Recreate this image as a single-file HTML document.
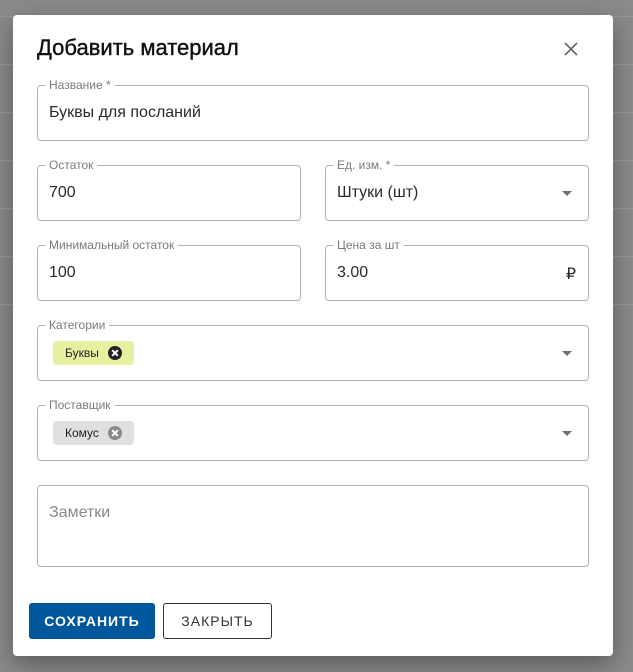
<!DOCTYPE html>
<html><head><meta charset="utf-8"><style>
*{box-sizing:border-box;margin:0;padding:0}
body{width:633px;height:672px;background:#8a8a8a;position:relative;overflow:hidden;font-family:"Liberation Sans","DejaVu Sans",sans-serif}
.ln{position:absolute;left:0;width:633px;height:1px;background:#9a9a9a}
.dlg{position:absolute;left:13px;top:15px;width:600px;height:641px;background:#fff;border-radius:4px;box-shadow:0 8px 24px rgba(0,0,0,.35)}
h1{position:absolute;left:37px;top:35px;font-size:22px;font-weight:normal;color:#111;-webkit-text-stroke:0.4px #111}
.f{position:absolute;border:1px solid #b0b0b0;border-radius:4px}
.lb{position:absolute;top:-8px;left:7px;padding:0 4px;background:#fff;font-size:12px;color:#7a7a7a;line-height:14px}
.v{position:absolute;left:11px;top:18px;font-size:16px;color:#2a2a2a}
.arr{position:absolute;right:16px;top:25px;width:0;height:0;border-left:5px solid transparent;border-right:5px solid transparent;border-top:5px solid #707070}
.chip{position:absolute;left:15px;top:15px;height:24px;border-radius:4px;font-size:12px;color:#222;padding:0 0 0 12px;line-height:24px}
.x{display:inline-block;width:14px;height:14px;border-radius:50%;vertical-align:-3px;margin:0 12px 0 9px;position:relative}
.x:before,.x:after{content:"";position:absolute;left:3px;top:6px;width:8px;height:2px;background:#fff;transform:rotate(45deg)}
.x:after{transform:rotate(-45deg)}
.btn{position:absolute;top:603px;height:36px;border-radius:3px;font-size:14px;letter-spacing:1px;text-align:center;line-height:34px}
</style></head><body>
<div class="ln" style="top:16px"></div><div class="ln" style="top:64px"></div><div class="ln" style="top:112px"></div><div class="ln" style="top:160px"></div><div class="ln" style="top:208px"></div><div class="ln" style="top:256px"></div><div class="ln" style="top:304px"></div>
<div class="dlg"></div>
<h1>Добавить материал</h1>
<svg style="position:absolute;left:563px;top:41px" width="16" height="16" viewBox="0 0 16 16"><path d="M2 2L14 14M14 2L2 14" stroke="#666" stroke-width="1.6"/></svg>
<div class="f" style="left:37px;top:85px;width:552px;height:56px"><span class="lb">Название *</span><span class="v">Буквы для посланий</span></div>
<div class="f" style="left:37px;top:165px;width:264px;height:56px"><span class="lb">Остаток</span><span class="v">700</span></div>
<div class="f" style="left:325px;top:165px;width:264px;height:56px"><span class="lb">Ед. изм. *</span><span class="v">Штуки (шт)</span><span class="arr"></span></div>
<div class="f" style="left:37px;top:245px;width:264px;height:56px"><span class="lb">Минимальный остаток</span><span class="v">100</span></div>
<div class="f" style="left:325px;top:245px;width:264px;height:56px"><span class="lb">Цена за шт</span><span class="v">3.00</span><span class="v" style="left:auto;right:12px">₽</span></div>
<div class="f" style="left:37px;top:325px;width:552px;height:56px"><span class="lb">Категории</span><span class="chip" style="background:#e6f0a0">Буквы<span class="x" style="background:#222"></span></span><span class="arr"></span></div>
<div class="f" style="left:37px;top:405px;width:552px;height:56px"><span class="lb">Поставщик</span><span class="chip" style="background:#e0e0e0">Комус<span class="x" style="background:#8a8a8a"></span></span><span class="arr"></span></div>
<div class="f" style="left:37px;top:485px;width:552px;height:82px"><span class="v" style="color:#888">Заметки</span></div>
<div class="btn" style="left:29px;width:126px;background:#00579b;color:#fff;font-weight:bold;line-height:36px">СОХРАНИТЬ</div>
<div class="btn" style="left:163px;width:109px;border:1px solid #333;color:#333">ЗАКРЫТЬ</div>
</body></html>
